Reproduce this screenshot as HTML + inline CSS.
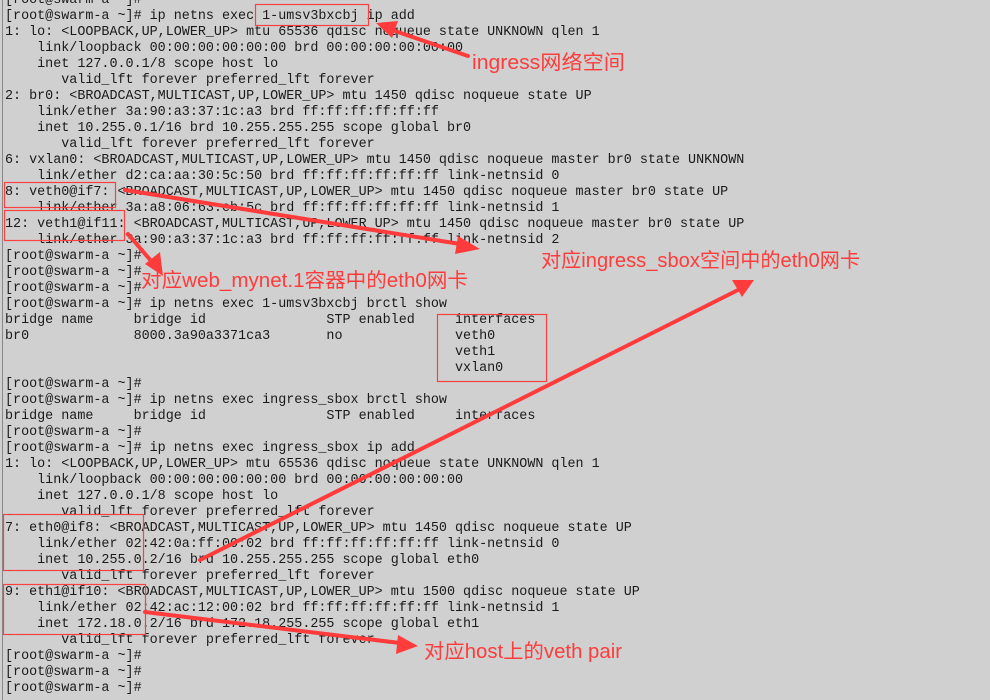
<!DOCTYPE html>
<html><head><meta charset="utf-8"><style>
html,body{margin:0;padding:0;}
body{width:990px;height:700px;background:#d0d0d0;position:relative;overflow:hidden;}
pre{position:absolute;left:5px;top:-7px;margin:0;font-family:"Liberation Mono",monospace;font-size:13.4px;line-height:16px;color:#1a1a1a;white-space:pre;}
.lb{position:absolute;left:2px;top:0;width:1px;height:700px;background:#888;}
svg{position:absolute;left:0;top:0;}
.t{font-family:"Liberation Sans","Noto Sans CJK SC",sans-serif;fill:#ff3b3b;}
</style></head><body>
<div class="lb"></div>
<pre>[root@swarm-a ~]#
[root@swarm-a ~]# ip netns exec 1-umsv3bxcbj ip add
1: lo: &lt;LOOPBACK,UP,LOWER_UP&gt; mtu 65536 qdisc noqueue state UNKNOWN qlen 1
    link/loopback 00:00:00:00:00:00 brd 00:00:00:00:00:00
    inet 127.0.0.1/8 scope host lo
       valid_lft forever preferred_lft forever
2: br0: &lt;BROADCAST,MULTICAST,UP,LOWER_UP&gt; mtu 1450 qdisc noqueue state UP
    link/ether 3a:90:a3:37:1c:a3 brd ff:ff:ff:ff:ff:ff
    inet 10.255.0.1/16 brd 10.255.255.255 scope global br0
       valid_lft forever preferred_lft forever
6: vxlan0: &lt;BROADCAST,MULTICAST,UP,LOWER_UP&gt; mtu 1450 qdisc noqueue master br0 state UNKNOWN
    link/ether d2:ca:aa:30:5c:50 brd ff:ff:ff:ff:ff:ff link-netnsid 0
8: veth0@if7: &lt;BROADCAST,MULTICAST,UP,LOWER_UP&gt; mtu 1450 qdisc noqueue master br0 state UP
    link/ether 3a:a8:06:63:eb:5c brd ff:ff:ff:ff:ff:ff link-netnsid 1
12: veth1@if11: &lt;BROADCAST,MULTICAST,UP,LOWER_UP&gt; mtu 1450 qdisc noqueue master br0 state UP
    link/ether 3a:90:a3:37:1c:a3 brd ff:ff:ff:ff:ff:ff link-netnsid 2
[root@swarm-a ~]#
[root@swarm-a ~]#
[root@swarm-a ~]#
[root@swarm-a ~]# ip netns exec 1-umsv3bxcbj brctl show
bridge name     bridge id               STP enabled     interfaces
br0             8000.3a90a3371ca3       no              veth0
                                                        veth1
                                                        vxlan0
[root@swarm-a ~]#
[root@swarm-a ~]# ip netns exec ingress_sbox brctl show
bridge name     bridge id               STP enabled     interfaces
[root@swarm-a ~]#
[root@swarm-a ~]# ip netns exec ingress_sbox ip add
1: lo: &lt;LOOPBACK,UP,LOWER_UP&gt; mtu 65536 qdisc noqueue state UNKNOWN qlen 1
    link/loopback 00:00:00:00:00:00 brd 00:00:00:00:00:00
    inet 127.0.0.1/8 scope host lo
       valid_lft forever preferred_lft forever
7: eth0@if8: &lt;BROADCAST,MULTICAST,UP,LOWER_UP&gt; mtu 1450 qdisc noqueue state UP
    link/ether 02:42:0a:ff:00:02 brd ff:ff:ff:ff:ff:ff link-netnsid 0
    inet 10.255.0.2/16 brd 10.255.255.255 scope global eth0
       valid_lft forever preferred_lft forever
9: eth1@if10: &lt;BROADCAST,MULTICAST,UP,LOWER_UP&gt; mtu 1500 qdisc noqueue state UP
    link/ether 02:42:ac:12:00:02 brd ff:ff:ff:ff:ff:ff link-netnsid 1
    inet 172.18.0.2/16 brd 172.18.255.255 scope global eth1
       valid_lft forever preferred_lft forever
[root@swarm-a ~]#
[root@swarm-a ~]#
[root@swarm-a ~]#</pre>
<svg width="990" height="700">
<g fill="none" stroke="#ff4040" stroke-width="1.2">
<rect x="255.5" y="4.5" width="113" height="21"/>
<rect x="4.5" y="182.5" width="111" height="25"/>
<rect x="4.5" y="210.5" width="120" height="30"/>
<rect x="437.5" y="314.5" width="109" height="67"/>
<rect x="3.5" y="514.5" width="140" height="56"/>
<rect x="3.5" y="584.5" width="142" height="50"/>
</g>
<g fill="#ff3b3b" stroke="#ff3b3b" stroke-linecap="round">
<line x1="468" y1="56" x2="392" y2="30" stroke-width="4"/>
<polygon points="376,23 398,21 392,38" stroke="none"/>
<line x1="125" y1="190" x2="460" y2="244" stroke-width="4"/>
<polygon points="480,249 458,236 455,254" stroke="none"/>
<line x1="128" y1="234" x2="152" y2="262" stroke-width="4"/>
<polygon points="163,276 145,264 160,252" stroke="none"/>
<line x1="200" y1="560" x2="738" y2="290" stroke-width="4"/>
<polygon points="754,280 732,280 742,297" stroke="none"/>
<line x1="145" y1="612" x2="400" y2="643" stroke-width="4"/>
<polygon points="418,646 398,635 396,654" stroke="none"/>
</g>
<text class="t" x="472" y="69" font-size="20" textLength="153" lengthAdjust="spacingAndGlyphs">ingress网络空间</text>
<text class="t" x="141" y="287" font-size="20" textLength="327" lengthAdjust="spacingAndGlyphs">对应web_mynet.1容器中的eth0网卡</text>
<text class="t" x="541" y="267" font-size="20" textLength="319" lengthAdjust="spacingAndGlyphs">对应ingress_sbox空间中的eth0网卡</text>
<text class="t" x="424" y="658" font-size="20" textLength="198" lengthAdjust="spacingAndGlyphs">对应host上的veth pair</text>
</svg>
</body></html>
